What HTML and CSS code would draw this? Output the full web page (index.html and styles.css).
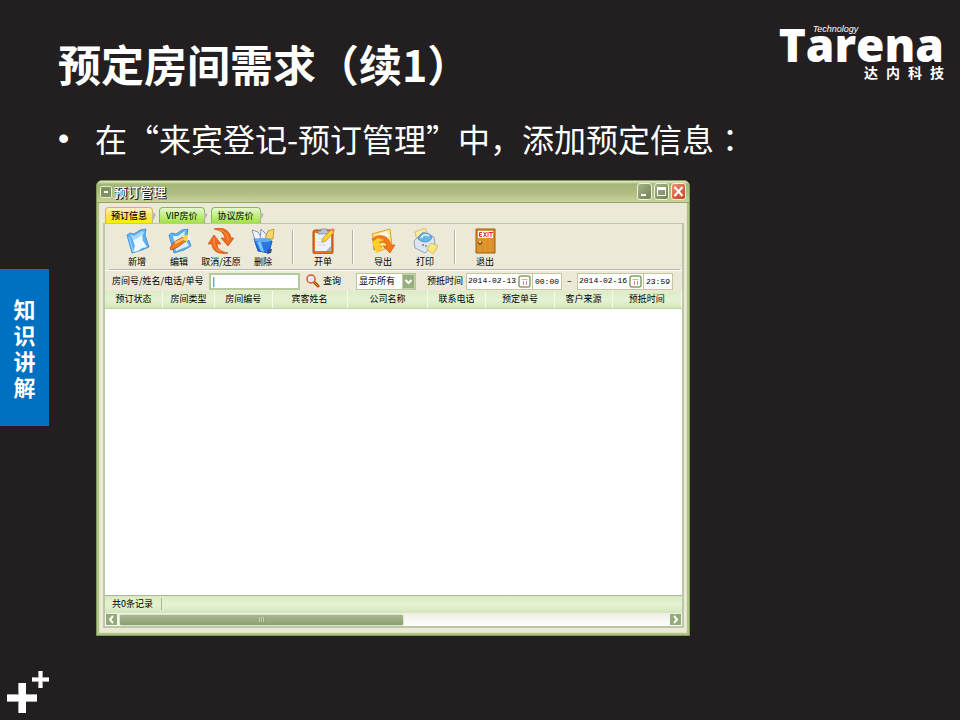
FILE: index.html
```html
<!DOCTYPE html>
<html lang="zh-CN">
<head>
<meta charset="utf-8">
<meta name="viewport" content="width=device-width, initial-scale=1">
<title>预定房间需求</title>
<link rel="stylesheet" href="styles.css">
</head>
<body>
<div class="slide">
  <aside class="rail">
    <div class="chapter"><span>知识讲解</span></div>
    <svg class="pluses" viewBox="0 0 42 42" aria-hidden="true">
      <path d="M11 12h8v11h11v8H19v11h-8V31H0v-8h11z" fill="#aaa"/>
      <path d="M12 12h7v12h11v6H19v12h-7V30H0v-6h12z" fill="#fff"/>
      <path d="M31 0h5v6h6v5h-6v6h-5v-6h-6V6h6z" fill="#aaa"/>
      <path d="M32 0h3v7h7v3h-7v7h-3v-7h-7V7h7z" fill="#fff"/>
    </svg>
  </aside>

  <main class="content">
    <header class="top">
      <h1>预定房间需求（续1）</h1>
      <div class="logo">
        <span class="logo-name">Tarena</span>
        <span class="logo-tech">Technology</span>
        <span class="logo-cn"><span>达</span><span>内</span><span>科</span><span>技</span></span>
      </div>
    </header>

    <ul class="points">
      <li>在“来宾登记-预订管理”中，添加预定信息<span class="colon" lang="zh-TW">：</span></li>
    </ul>

    <section class="window" aria-label="预订管理">
      <div class="titlebar">
        <span class="sysmenu"></span>
        <h2>预订管理</h2>
        <div class="controls">
          <button class="ctl" aria-label="最小化"><svg viewBox="0 0 13 15"><path d="M3 10h5v2H3z" fill="#fff"/></svg></button>
          <button class="ctl" aria-label="最大化"><svg viewBox="0 0 13 15"><path d="M2.500 4.500h8v7h-8z" fill="none" stroke="#fff"/><path d="M2 3h9v3H2z" fill="#fff"/></svg></button>
          <button class="ctl close" aria-label="关闭"><svg viewBox="0 0 13 15"><path d="M2.500 3l8 9M10.500 3l-8 9" stroke="#fff" stroke-width="2"/></svg></button>
        </div>
      </div>

      <nav class="tabs">
        <button class="tab active">预订信息</button>
        <button class="tab">VIP房价</button>
        <button class="tab">协议房价</button>
      </nav>

      <div class="panel">
        <div class="toolbar">
          <button class="tool">
            <svg viewBox="0 0 26 26"><path d="M3 7L6 5l4 1 6-4 6-1-1 6 4 12-7 3-10 3z" fill="#5fb2f2" stroke="#3586d0" stroke-width=".8"/><path d="M6 6l4 2 8-5 2 1-2 5-9 3z" fill="#a6dafc"/><path d="M9 12l5-2 4-3 1 6 4 6-5 1-4 3-5 1 2-6z" fill="#eefaff"/><path d="M5 9l4 15" stroke="#9bd3fb"/></svg>
            <span>新增</span>
          </button>
          <button class="tool">
            <svg viewBox="0 0 26 26"><path d="M3 7l3-2 4 1 6-4 6-1-1 6 4 11-7 4-10 3z" fill="#5fb2f2" stroke="#3586d0" stroke-width=".8"/><path d="M7 8l5 0 7-5-1 6 5 9-6 2-7 3z" fill="#d8f0ff"/><path d="M4 20l4-6 9-5 3 4-8 6-7 3z" fill="#f47a1c" stroke="#bc4d10" stroke-width=".8"/><path d="M9 15l8-4" stroke="#ffc06a" stroke-width="2"/><circle cx="20" cy="10" r="3" fill="#ffd84d"/><path d="M22 7l3 1-1 4-2 0z" fill="#f2f2f2"/></svg>
            <span>编辑</span>
          </button>
          <button class="tool">
            <svg viewBox="0 0 26 26"><path d="M6 1c9-3 16 2 17 9h3l-6 8-7-8h4c-1-5-5-8-11-9z" fill="#f26a1b" stroke="#c04a10" stroke-width=".6"/><path d="M20 25c-9 2-16-2-16-9H0l6-9 7 9H9c0 5 5 8 11 9z" fill="#f26a1b" stroke="#c04a10" stroke-width=".6"/><path d="M11 2c6 1 9 5 9 11M6 10v6c1 4 4 6 7 7" fill="none" stroke="#ff9d52"/></svg>
            <span>取消/还原</span>
          </button>
          <button class="tool">
            <svg viewBox="0 0 26 26"><path d="M5 12L2 2l6 2 5 8z" fill="#f1f4f8" stroke="#8796b4"/><path d="M10 12l1-11 5 5 1 6z" fill="#e6edf6" stroke="#8796b4"/><path d="M15 11l3-8 6-2-1 10z" fill="#ffd769" stroke="#c99b36"/><path d="M4 11l18 2-3 12-11-2z" fill="#2878e0" stroke="#1757b8"/><path d="M7 14l4 9 3 1-3-10z" fill="#7fc4ff"/><ellipse cx="13" cy="12" rx="9" ry="2" fill="#62acf5"/><path d="M18 21h4l-1 4-4 1z" fill="#37518e"/></svg>
            <span>删除</span>
          </button>
          <i class="sep"></i>
          <button class="tool">
            <svg viewBox="0 0 26 26"><rect x="3" y="2" width="20" height="24" rx="2" fill="#e9701c" stroke="#b94b10"/><path d="M5 5h16v18H5z" fill="#eef2fb"/><path d="M16 23l5-5v5z" fill="#a9b1c6"/><path d="M8 6V3h3V1h6v2h3v3z" fill="#bbc2d2" stroke="#7d859b" stroke-width=".7"/><path d="M9 11h8M8 14h6M8 17h8" stroke="#d3d8e6"/><path d="M12 14l1-4 8-8 3 2-8 9z" fill="#ffd42b" stroke="#b98716" stroke-width=".7"/><path d="M21 1l2-1 2 2-1 2z" fill="#ef8383"/></svg>
            <span>开单</span>
          </button>
          <i class="sep"></i>
          <button class="tool">
            <svg viewBox="0 0 26 26"><path d="M2 6L20 1l2 17-15 6z" fill="#ffe58b" stroke="#dda12b"/><path d="M7 6l11-3 1 9-8-5z" fill="#fff8df"/><path d="M2 11c7-6 17-4 19 6h4l-5 8-7-7h4c-1-4-5-5-8-2l3 3-8 3-1-9z" fill="#f47a18" stroke="#c2500c" stroke-width=".6"/><path d="M2 14l6-4 6 2-5 2 3 7-6 4-2-6z" fill="#ffd02c"/></svg>
            <span>导出</span>
          </button>
          <button class="tool">
            <svg viewBox="0 0 26 26"><path d="M3 4l10-4 3 8-11 5z" fill="#ffec9b" stroke="#c5ad60" stroke-width=".7"/><path d="M2 13l9-9 11 5 1 7-10 9-10-5z" fill="#dce5f2" stroke="#7d93b4" stroke-width=".8"/><path d="M6 11c2-7 11-8 14-2-1 5-8 7-14 2z" fill="#69b5e8" stroke="#397fb4" stroke-width=".7"/><path d="M9 10c2-4 6-4 8-2" fill="none" stroke="#ccefff" stroke-width="2"/><circle cx="11" cy="17" r="1" fill="#e44b4b"/><circle cx="14" cy="18" r="1" fill="#39b358"/><path d="M15 21l4-6 7 3-5 8z" fill="#ffe77d" stroke="#c5a84b" stroke-width=".7"/></svg>
            <span>打印</span>
          </button>
          <i class="sep"></i>
          <button class="tool">
            <svg viewBox="0 0 26 26"><path d="M4 1h19v24H4z" fill="#dc9027" stroke="#9c5c10"/><path d="M8 2v22M13 2v22M18 2v22" stroke="#e6a03a"/><path d="M6 3h15v7H6z" fill="#fff"/><path d="M10 4.500H7.500v4H10M7.500 6.500h2M11.500 4l3 5M14.500 4l-3 5M16 4v5M17 4.500h4M19 4.500V9" fill="none" stroke="#e52d35"/><circle cx="8" cy="15" r="2" fill="#87551a"/><circle cx="8" cy="14" r="1" fill="#ffe4a1"/></svg>
            <span>退出</span>
          </button>
        </div>

        <form class="filters">
          <label for="q">房间号/姓名/电话/单号</label>
          <input id="q" class="query" type="text" value="|">
          <button type="button" class="search">
            <svg viewBox="0 0 14 14"><path d="M7 7l5 5" stroke="#a8401a" stroke-width="3" stroke-linecap="round"/><path d="M8 8l4 4" stroke="#f0a020"/><circle cx="5" cy="5" r="4" fill="#d9f1ff" stroke="#e0531c" stroke-width="1.5"/><path d="M3 5c0-1 1-2 2-2" fill="none" stroke="#fff"/></svg>
            <span>查询</span>
          </button>
          <span class="picker">
            <select aria-label="显示范围"><option>显示所有</option></select>
            <svg viewBox="0 0 13 15" aria-hidden="true"><rect width="13" height="15" fill="#98ae7c"/><path d="M.5.5h12v14H.5z" fill="none" stroke="#c4d2ae"/><path d="M3.500 6l3 3 3-3" fill="none" stroke="#fff" stroke-width="2"/></svg>
          </span>
          <label for="from" class="arrival">预抵时间</label>
          <span class="when">
            <input id="from" class="date" value="2014-02-13">
            <button type="button" class="cal" aria-label="选择开始日期"><svg viewBox="0 0 13 13"><rect x="1" y="1" width="11" height="11" rx="2" fill="#fff" stroke="#8ba068" stroke-width="1.500"/><path d="M3.500 4.500h6" stroke="#bbb"/><path d="M5.500 6v4M8.500 6v4" stroke="#c58a9c"/></svg></button>
            <input class="time" aria-label="开始时间" value="00:00">
          </span>
          <span class="dash">–</span>
          <span class="when">
            <input class="date" aria-label="结束日期" value="2014-02-16">
            <button type="button" class="cal" aria-label="选择结束日期"><svg viewBox="0 0 13 13"><rect x="1" y="1" width="11" height="11" rx="2" fill="#fff" stroke="#8ba068" stroke-width="1.500"/><path d="M3.500 4.500h6" stroke="#bbb"/><path d="M5.500 6v4M8.500 6v4" stroke="#c58a9c"/></svg></button>
            <input class="time" aria-label="结束时间" value="23:59">
          </span>
        </form>

        <div class="grid">
          <table>
            <colgroup><col class="c10"><col class="c9"><col class="c10"><col class="c13"><col class="c14"><col class="c10"><col class="c12"><col class="c10"><col></colgroup>
            <thead>
              <tr><th>预订状态</th><th>房间类型</th><th>房间编号</th><th>宾客姓名</th><th>公司名称</th><th>联系电话</th><th>预定单号</th><th>客户来源</th><th>预抵时间</th></tr>
            </thead>
            <tbody></tbody>
          </table>
        </div>

        <div class="status"><span>共0条记录</span></div>
        <div class="scroll">
          <button class="arrow" aria-label="向左滚动"><svg viewBox="0 0 11 11"><path d="M7 2L4 5.500 7 9" fill="none" stroke="#fff" stroke-width="2"/></svg></button>
          <div class="track"><div class="thumb"><i></i></div></div>
          <button class="arrow" aria-label="向右滚动"><svg viewBox="0 0 11 11"><path d="M4 2l3 3.500L4 9" fill="none" stroke="#fff" stroke-width="2"/></svg></button>
        </div>
      </div>
    </section>
  </main>
</div>
</body>
</html>
```
FILE: styles.css
```css
* { box-sizing: border-box; }

body {
  margin: 0;
  background: #231f20;
  color: #fff;
  font-family: "Noto Sans CJK SC", sans-serif;
  text-spacing-trim: space-all;
}

button, input, select {
  margin: 0;
  padding: 0;
  border: 0;
  background: none;
  color: inherit;
  font: inherit;
}

svg { display: block; }

.slide {
  display: grid;
  grid-template-columns: 49px 1fr;
  min-height: 100vh;
}

/* left rail */
.rail {
  display: flex;
  flex-direction: column;
  justify-content: space-between;
  padding: 269px 0 7px;
}

.chapter {
  display: flex;
  justify-content: center;
  padding: 26px 0 27px;
  background: #0070c0;
  font-size: 22px;
  font-weight: 700;
  line-height: 26px;
}

.chapter span { width: 22px; }

.pluses {
  width: 42px;
  height: 42px;
  margin-left: 7px;
}

/* heading area */
.content {
  display: flex;
  flex-direction: column;
  padding: 25px 16px 84px 9px;
}

.top {
  display: flex;
  justify-content: space-between;
  height: 84px;
}

h1 {
  margin: 6px 0 0;
  font-size: 43px;
  line-height: 64px;
  font-weight: 700;
}

.logo {
  position: relative;
  display: flex;
  flex-direction: column;
  align-items: flex-end;
}

.logo-name {
  font-family: "Open Sans", sans-serif;
  font-size: 46px;
  font-weight: 800;
  line-height: 38px;
}

.logo-tech {
  position: absolute;
  top: -1px;
  left: 34px;
  font: italic 9px/10px "Liberation Sans", sans-serif;
}

.logo-cn {
  display: flex;
  gap: 8px;
  font-size: 14px;
  line-height: 18px;
  font-weight: 700;
}

.points {
  margin: 0;
  padding: 0 0 4px 37px;
  list-style: none;
  font-size: 32px;
  line-height: 58px;
  font-weight: 400;
}

.points li::before {
  content: "•";
  float: left;
  width: 37px;
  margin-left: -37px;
  font-family: "Liberation Sans", sans-serif;
}

.colon { font-family: "Noto Sans CJK TC", sans-serif; }

/* application window */
.window {
  display: flex;
  flex: 1;
  flex-direction: column;
  margin: 9px 254px 0 38px;
  padding: 0 4px 4px;
  border: 1px solid #7d9a5b;
  border-radius: 6px 6px 0 0;
  background: #ece9d8;
  box-shadow: inset 0 0 0 2px #b2c288, inset 0 0 0 3px #dfe5c2;
  color: #000;
  font-size: 9px;
  line-height: 12px;
}

.titlebar {
  display: flex;
  align-items: center;
  height: 22px;
  margin: 0 -4px;
  padding: 0 3px;
  border-radius: 5px 5px 0 0;
  border-bottom: 1px solid #90a566;
  background: linear-gradient(#dbe4b8 0, #dbe4b8 1px, #a5b577 3px, #b1be84 60%, #cad29d);
}

.sysmenu {
  width: 12px;
  height: 12px;
  margin-right: 2px;
  border: 1px solid #e6edc9;
  border-radius: 2px;
  background: linear-gradient(#fff, #fff) center / 4px 2px no-repeat, #7f9460;
}

h2 {
  margin: 0;
  font-size: 13px;
  line-height: 20px;
  font-weight: 500;
  color: #fff;
  text-shadow: 1px 1px 0 #222, 1px 0 0 #444;
}

.controls {
  display: flex;
  gap: 2px;
  margin-left: auto;
}

.ctl {
  width: 15px;
  height: 17px;
  border: 1px solid #eef2dc;
  border-radius: 3px;
  background: linear-gradient(135deg, #a5b58b, #718454);
}

.ctl.close { background: linear-gradient(135deg, #ed9270, #c8401c); }

.tabs {
  display: flex;
  gap: 6px;
  padding: 4px 0 0 4px;
}

.tab {
  position: relative;
  height: 16px;
  padding: 0 5px;
  border: 1px solid #83bb55;
  border-bottom: 0;
  border-radius: 4px 4px 0 0;
  background: linear-gradient(#e6f8cc, #c2ee87 50%, #a0e048);
}

.tab:not(.active) { padding: 0 6px; }

.tab::after {
  content: "";
  position: absolute;
  top: 3px;
  left: 100%;
  width: 4px;
  height: 12px;
  background: #bdbba9;
  clip-path: polygon(0 0, 100% 30%, 0 100%);
}

.tab.active {
  border-color: #f0ae35;
  background: linear-gradient(#fff3c9, #ffe25a 45%, #ffee00);
  font-weight: 500;
}

.panel {
  display: flex;
  flex: 1;
  flex-direction: column;
  margin: 0 1px 3px 2px;
  border: 2px solid #b9c9a4;
  border-top-width: 1px;
}

.toolbar {
  display: flex;
  margin: 0 2px 0 4px;
  padding: 4px 7px 1px;
  border-bottom: 1px solid #bcb9aa;
}

.tool {
  display: flex;
  flex-direction: column;
  align-items: center;
  width: 42px;
  gap: 2px;
  white-space: nowrap;
}

.tool svg {
  width: 26px;
  height: 26px;
}

.sep {
  width: 2px;
  height: 34px;
  margin: 2px 8px 0;
  border-left: 1px solid #b5b2a1;
  border-right: 1px solid #fff;
}

.filters {
  display: flex;
  align-items: center;
  height: 21px;
  padding: 0 9px 0 7px;
  border-top: 1px solid #fff;
}

.query {
  flex: 1;
  min-width: 40px;
  height: 17px;
  margin-left: 5px;
  padding: 0 2px;
  border: 2px solid #b5c99b;
  background: #fff;
}

.search {
  display: flex;
  align-items: center;
  gap: 3px;
  margin: 0 15px 0 6px;
}

.search svg {
  width: 14px;
  height: 14px;
}

.picker {
  position: relative;
  width: 60px;
  height: 17px;
  border: 1px solid #b5c99b;
}

.picker select {
  display: block;
  width: 100%;
  height: 15px;
  padding-left: 2px;
  appearance: none;
  background: #fff;
}

.picker svg {
  position: absolute;
  top: 0;
  right: 0;
  width: 13px;
  height: 15px;
  pointer-events: none;
}

.arrival { margin: 0 3px 0 11px; }

.when {
  display: flex;
  align-items: center;
  height: 17px;
  border: 1px solid #c3c79f;
  background: #fff;
  font-family: "Liberation Mono", monospace;
  font-size: 8px;
}

.date {
  width: 51px;
  padding-left: 1px;
}

.cal svg {
  width: 13px;
  height: 13px;
}

.time {
  width: 29px;
  height: 15px;
  margin-left: 1px;
  padding-left: 2px;
  border-left: 1px solid #b5c99b;
}

.dash {
  width: 15px;
  text-align: center;
}

.grid {
  flex: 1;
  background: #fff;
}

table {
  width: 100%;
  border-collapse: collapse;
  table-layout: fixed;
}

.c9 { width: 9%; }
.c10 { width: 10%; }
.c12 { width: 12%; }
.c13 { width: 13%; }
.c14 { width: 14%; }

th {
  height: 17px;
  padding: 0;
  border-right: 1px solid #f7fcee;
  border-bottom: 1px solid #bfd5a2;
  background: linear-gradient(#dcebc5, #e6f2d4 50%, #d3e6b9);
  font-weight: 400;
}

.status {
  padding: 2px 7px 3px;
  border-top: 1px solid #adb59f;
  background: linear-gradient(#d8ebbf, #e5f3d3 50%, #d3e6bb);
}

.status span {
  display: inline-block;
  padding-right: 8px;
  border-right: 1px solid #a9b893;
}

.scroll {
  display: flex;
  align-items: center;
  gap: 2px;
  height: 13px;
  padding: 0 1px;
  background: linear-gradient(#efede5, #fff);
}

.arrow {
  width: 11px;
  height: 11px;
  background: #95aa79;
}

.track { flex: 1; }

.thumb {
  display: flex;
  align-items: center;
  justify-content: center;
  width: 52%;
  height: 12px;
  border: 1px solid #dce4d0;
  border-radius: 2px;
  background: linear-gradient(#a6b78d, #8ba070);
}

.thumb i {
  width: 6px;
  height: 5px;
  background: repeating-linear-gradient(90deg, #c4d2a9 0, #c4d2a9 1px, #93a873 1px, #93a873 2px);
}
```
